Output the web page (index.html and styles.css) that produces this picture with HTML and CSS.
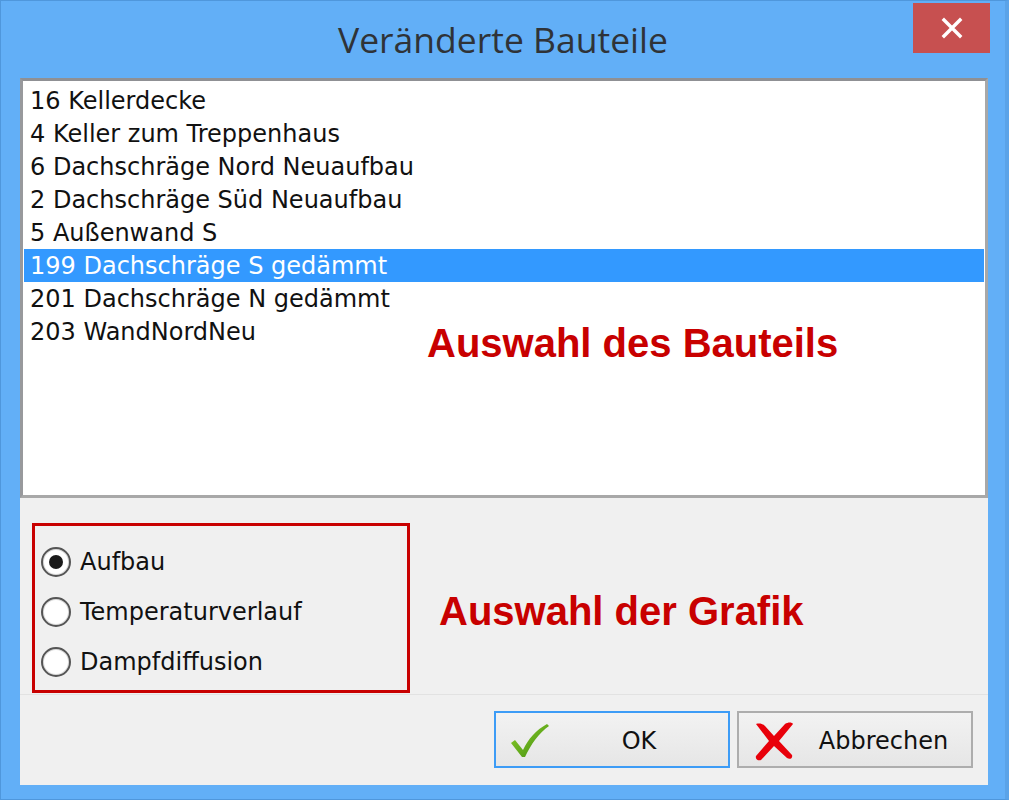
FILE: index.html
```html
<!DOCTYPE html>
<html lang="de">
<head>
<meta charset="utf-8">
<title>Veränderte Bauteile</title>
<link rel="stylesheet" href="styles.css">
</head>
<body>
<div class="window">
  <div class="titlebar">
    <div class="title">Veränderte Bauteile</div>
    <div class="close">
      <svg width="22" height="22" viewBox="0 0 22 22"><path d="M3 3 L19 19 M19 3 L3 19" stroke="#fff" stroke-width="3.4" stroke-linecap="square"/></svg>
    </div>
  </div>
  <div class="client">
    <div class="listbox">
      <div class="row">16 Kellerdecke</div>
      <div class="row">4 Keller zum Treppenhaus</div>
      <div class="row">6 Dachschräge Nord Neuaufbau</div>
      <div class="row">2 Dachschräge Süd Neuaufbau</div>
      <div class="row">5 Außenwand S</div>
      <div class="row selected">199 Dachschräge S gedämmt</div>
      <div class="row">201 Dachschräge N gedämmt</div>
      <div class="row">203 WandNordNeu</div>
      <div class="note note-list">Auswahl des Bauteils</div>
    </div>
    <div class="panel">
      <div class="options">
        <div class="group">
          <label class="radio"><span class="dot checked"></span><span>Aufbau</span></label>
          <label class="radio"><span class="dot"></span><span>Temperaturverlauf</span></label>
          <label class="radio"><span class="dot"></span><span>Dampfdiffusion</span></label>
        </div>
        <div class="note note-grafik">Auswahl der Grafik</div>
      </div>
      <div class="buttons">
        <div class="btn btn-ok">
          <svg class="ico" width="40" height="36" viewBox="0 0 40 36">
            <defs>
              <linearGradient id="g" x1="0" y1="0" x2="1" y2="1">
                <stop offset="0" stop-color="#8fd12a"/>
                <stop offset="1" stop-color="#3f8a10"/>
              </linearGradient>
            </defs>
            <path d="M1 20 L5 17 L13 27 C18 16 26 7 37 1 L39 3 C29 10 21 21 15 34 L12 34 Z" fill="url(#g)"/>
          </svg>
          <span class="lbl">OK</span>
        </div>
        <div class="btn btn-cancel">
          <svg class="ico" width="44" height="42" viewBox="0 0 44 42">
            <path d="M4 4 C8 3 11 4 13 6 L22 16 L33 4 C36 2 40 2 41 4 L27 21 L40 35 C41 38 38 40 35 38 L22 26 L9 40 C6 41 3 39 4 36 L17 21 Z" fill="#e8000a"/>
          </svg>
          <span class="lbl">Abbrechen</span>
        </div>
      </div>
    </div>
  </div>
</div>
</body>
</html>
```

FILE: styles.css
```css
* { box-sizing: border-box; }
html, body { margin: 0; padding: 0; }
body { width: 1009px; height: 800px; overflow: hidden; background: #62aff7; }

.window {
  width: 1009px;
  height: 800px;
  background: #62aff7;
  border: 1px solid #4f97dc;
  border-right: 4px solid #5aa3e8;
  display: flex;
  flex-direction: column;
  padding: 0 17px 14px 19px;
}

.titlebar {
  height: 77px;
  flex: none;
  position: relative;
  display: flex;
  justify-content: center;
}
.title {
  font-family: "Open Sans", "Noto Sans", sans-serif;
  font-size: 35.5px;
  color: #2f3338;
  padding-top: 16px;
  padding-right: 2px;
  line-height: 44px;
}
.close {
  position: absolute;
  right: -2px;
  top: 2px;
  width: 77px;
  height: 50px;
  background: #c75050;
  display: flex;
  align-items: center;
  justify-content: center;
}

.client {
  flex: 1;
  display: flex;
  flex-direction: column;
  background: #f0f0f0;
  font-family: "DejaVu Sans", sans-serif;
}

.listbox {
  position: relative;
  height: 420px;
  flex: none;
  background: #fff;
  border: 3px solid #a8a8a8;
  border-top-color: #8f9094;
  border-left-color: #98999c;
  padding: 3px 1px;
}
.row {
  height: 33px;
  line-height: 35px;
  padding-left: 6px;
  font-size: 24px;
  color: #111;
  white-space: nowrap;
}
.row.selected {
  background: #3399ff;
  color: #fff;
}

.note {
  font-family: "Liberation Sans", Arial, sans-serif;
  font-weight: bold;
  font-size: 40px;
  color: #c80000;
  white-space: nowrap;
}
.note-list {
  position: absolute;
  left: 404px;
  top: 240px;
}

.panel {
  flex: 1;
  display: flex;
  flex-direction: column;
}
.options {
  height: 197px;
  flex: none;
  display: flex;
  align-items: center;
  padding: 25px 0 2px 12px;
  border-bottom: 1px solid #e2e2e2;
  gap: 29px;
}
.group {
  width: 378px;
  height: 170px;
  border: 3px solid #c80000;
  display: flex;
  flex-direction: column;
  justify-content: center;
  gap: 20px;
  padding: 7px 0 0 6px;
  align-self: flex-start;
}
.radio {
  display: flex;
  align-items: center;
  gap: 9px;
  height: 30px;
  font-size: 24px;
  color: #111;
}
.dot {
  width: 30px;
  height: 30px;
  border-radius: 50%;
  border: 2px solid #555;
  background: #fff;
  box-shadow: inset 0 0 0 1px #dcdcdc;
  display: flex;
  align-items: center;
  justify-content: center;
  flex: none;
}
.dot.checked::after {
  content: "";
  width: 14px;
  height: 14px;
  border-radius: 50%;
  background: #1a1a1a;
}
.note-grafik {
  margin-top: 8px;
}

.buttons {
  flex: 1;
  display: flex;
  justify-content: flex-end;
  align-items: flex-start;
  padding: 16px 15px 0 0;
  gap: 7px;
}
.btn {
  width: 236px;
  height: 57px;
  display: flex;
  align-items: center;
  background: linear-gradient(#f2f2f2, #e6e6e6);
  border: 2px solid #adadad;
  font-size: 24px;
  color: #111;
  padding-left: 14px;
  padding-top: 3px;
}
.btn-ok {
  border-color: #3d9cf6;
}
.btn-cancel {
  padding-left: 13px;
}
.ico { flex: none; }
.lbl {
  flex: 1;
  text-align: center;
}
```
